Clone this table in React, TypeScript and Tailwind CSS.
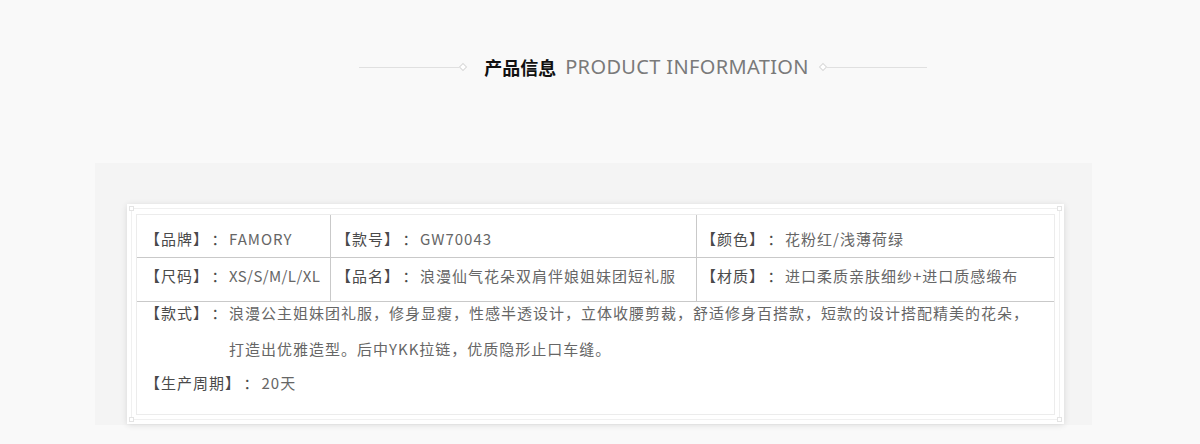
import type { ReactNode } from "react";

const CJK = "font-['Noto_Sans_CJK_SC','Noto_Sans',sans-serif]";

function Heading() {
  return (
    <div className="flex justify-center pl-[86px] pt-[52px] h-[163px]">
      <div className="flex items-center h-[30px]">
        <div className="w-[100px] h-px bg-[#e0e0e0]" />
        <div className="w-[6px] h-[6px] rotate-45 border border-[#d8d8d8] bg-white ml-px" />
        <h2 className={`ml-[18px] text-[18px] font-bold text-[#111] ${CJK}`}>产品信息</h2>
        <span className="ml-[9px] text-[20px] text-[#7a7a7a] font-['Noto_Sans',sans-serif] tracking-[0.35px]">
          PRODUCT INFORMATION
        </span>
        <div className="ml-[11px] w-[6px] h-[6px] rotate-45 border border-[#d8d8d8] bg-white" />
        <div className="ml-px w-[100px] h-px bg-[#e0e0e0]" />
      </div>
    </div>
  );
}

function Label({ text, className = "w-[84px]" }: { text: string; className?: string }) {
  return (
    <span className={`shrink-0 text-[#4a4a4a] ${className}`}>
      {text}
      <span className="ml-[10px]">：</span>
    </span>
  );
}

function Cell({ label, value, className = "" }: { label: string; value: ReactNode; className?: string }) {
  return (
    <div className={`flex h-[43px] leading-[20px] whitespace-nowrap ${className}`}>
      <Label text={label} />
      <span className="text-[#666]">{value}</span>
    </div>
  );
}

export default function App() {
  return (
    <div className="w-[1200px] h-[444px] bg-[#f9f9f9] overflow-hidden">
      <Heading />

      <div className="ml-[95px] w-[997px] h-[262px] bg-[#f4f4f4] pt-[41px] pl-[32px]">
        <div className="relative w-[937px] h-[220px] bg-white shadow-[0_1px_6px_rgba(0,0,0,0.12)] p-[9px] pt-[10px]">
          {/* frame decoration */}
          <div className="absolute inset-[4px] border border-[#f0f0f0] pointer-events-none" />
          <div className="absolute left-[2px] top-[2px] w-[5px] h-[5px] border border-[#e4e4e4] bg-white" />
          <div className="absolute right-[2px] top-[2px] w-[5px] h-[5px] border border-[#e4e4e4] bg-white" />
          <div className="absolute left-[2px] bottom-[2px] w-[5px] h-[5px] border border-[#e4e4e4] bg-white" />
          <div className="absolute right-[2px] bottom-[2px] w-[5px] h-[5px] border border-[#e4e4e4] bg-white" />

          <div className={`relative h-full border border-[#ececec] bg-white text-[15px] tracking-[1px] ${CJK}`}>
            <div className="grid grid-cols-[194px_366px_1fr] border-b border-[#c9c9c9]">
              <Cell label="【品牌】" value="FAMORY" className="pl-[8px] pt-[14px] border-r border-[#c9c9c9] border-b" />
              <Cell label="【款号】" value="GW70043" className="pl-[5px] pt-[14px] border-r border-[#c9c9c9] border-b" />
              <Cell label="【颜色】" value="花粉红/浅薄荷绿" className="pl-[4px] pt-[14px] border-b border-[#c9c9c9]" />
              <Cell
                label="【尺码】"
                value={<span className="tracking-[0.4px]">XS/S/M/L/XL</span>}
                className="pl-[8px] pt-[8px] border-r border-[#c9c9c9]"
              />
              <Cell label="【品名】" value="浪漫仙气花朵双肩伴娘姐妹团短礼服" className="pl-[5px] pt-[8px] border-r border-[#c9c9c9]" />
              <Cell label="【材质】" value="进口柔质亲肤细纱+进口质感缎布" className="pl-[4px] pt-[8px]" />
            </div>

            <div className="pl-[8px] leading-[35.5px]">
              <div className="flex -mt-[7px]">
                <Label text="【款式】" />
                <div className="text-[#666] whitespace-nowrap">
                  <div>浪漫公主姐妹团礼服，修身显瘦，性感半透设计，立体收腰剪裁，舒适修身百搭款，短款的设计搭配精美的花朵，</div>
                  <div>打造出优雅造型。后中YKK拉链，优质隐形止口车缝。</div>
                </div>
              </div>
              <div className="flex -mt-px">
                <Label text="【生产周期】" className="" />
                <span className="ml-[2px] text-[#666]">20天</span>
              </div>
            </div>
          </div>
        </div>
      </div>
    </div>
  );
}
